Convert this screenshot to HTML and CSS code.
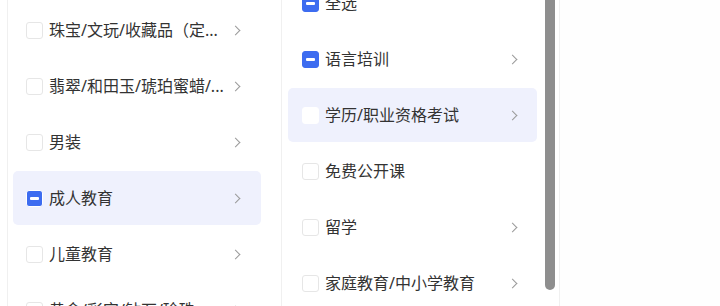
FILE: index.html
```html
<!DOCTYPE html>
<html lang="zh-CN">
<head>
    <meta charset="UTF-8">
    <meta name="viewport" content="width=device-width, initial-scale=1.0">
    <title>类目选择</title>
    <link rel="stylesheet" href="styles.css">
</head>
<body>
    <div class="picker">
        <div class="column column-main">
            <div class="list">
                <div class="item"><span class="check"></span><span class="label">珠宝/文玩/收藏品（定...</span><span class="arrow"></span></div>
                <div class="item"><span class="check"></span><span class="label">翡翠/和田玉/琥珀蜜蜡/...</span><span class="arrow"></span></div>
                <div class="item"><span class="check"></span><span class="label">男装</span><span class="arrow"></span></div>
                <div class="item active"><span class="check partial"></span><span class="label">成人教育</span><span class="arrow"></span></div>
                <div class="item"><span class="check"></span><span class="label">儿童教育</span><span class="arrow"></span></div>
                <div class="item"><span class="check"></span><span class="label">黄金/彩宝/钻石/珍珠</span><span class="arrow"></span></div>
            </div>
        </div>
        <div class="column column-sub">
            <div class="list scrolled">
                <div class="item"><span class="check partial"></span><span class="label">全选</span></div>
                <div class="item"><span class="check partial"></span><span class="label">语言培训</span><span class="arrow"></span></div>
                <div class="item active"><span class="check"></span><span class="label">学历/职业资格考试</span><span class="arrow"></span></div>
                <div class="item"><span class="check"></span><span class="label">免费公开课</span></div>
                <div class="item"><span class="check"></span><span class="label">留学</span><span class="arrow"></span></div>
                <div class="item"><span class="check"></span><span class="label">家庭教育/中小学教育</span><span class="arrow"></span></div>
            </div>
            <div class="scrollbar"><div class="thumb"></div></div>
        </div>
        <div class="rest"></div>
    </div>
</body>
</html>
```
FILE: styles.css
```css
body {
    margin: 0;
    padding: 0;
    background: #ffffff;
    font-family: "Noto Sans", "Noto Sans CJK SC", sans-serif;
    color: #333333;
    height: 306px;
    overflow: hidden;
}

.picker {
    display: flex;
    height: 306px;
    padding-left: 7px;
}

.column {
    height: 306px;
    overflow: hidden;
    box-sizing: border-box;
}

.column-main {
    width: 275px;
    border-left: 1px solid #f0f0f0;
    border-right: 1px solid #f0f0f0;
    padding: 3px 20px 0 5px;
}

.column-sub {
    width: 278px;
    display: flex;
    border-right: 1px solid #f0f0f0;
    padding-left: 6px;
}

.column-sub .list {
    flex: 1;
    margin-right: 8px;
}

.list.scrolled {
    margin-top: -24px;
}

.item {
    display: flex;
    align-items: center;
    height: 54px;
    margin-bottom: 2px;
    padding: 0 20px 0 13px;
    border-radius: 5px;
    font-size: 16px;
    line-height: 20px;
}

.column-sub .item {
    padding: 0 19px 0 14px;
}

.item.active {
    background: #eff1fd;
}

.check {
    flex: none;
    width: 17px;
    height: 17px;
    box-sizing: border-box;
    border: 1px solid #e6e6e6;
    border-radius: 3px;
    background: #ffffff;
    margin-right: 6px;
    position: relative;
}

.item.active .check {
    border-color: #ffffff;
}

.check.partial {
    background: #3d6cf0;
    border-color: #3d6cf0;
}

.check.partial::after {
    content: "";
    position: absolute;
    left: 3px;
    right: 3px;
    top: 6px;
    height: 3px;
    border-radius: 1px;
    background: #ffffff;
}

.label {
    flex: 1;
    white-space: nowrap;
}

.arrow {
    flex: none;
    width: 6px;
    height: 6px;
    border-top: 1.4px solid #9a9a9a;
    border-right: 1.4px solid #9a9a9a;
    transform: rotate(45deg);
    margin-right: 2px;
}

.scrollbar {
    flex: none;
    width: 10px;
    margin-right: 4px;
}

.thumb {
    width: 10px;
    height: 290px;
    background: #8e8e8e;
    border-radius: 0 0 5px 5px;
}

.rest {
    flex: 1;
    background: #fefefe;
}
```
